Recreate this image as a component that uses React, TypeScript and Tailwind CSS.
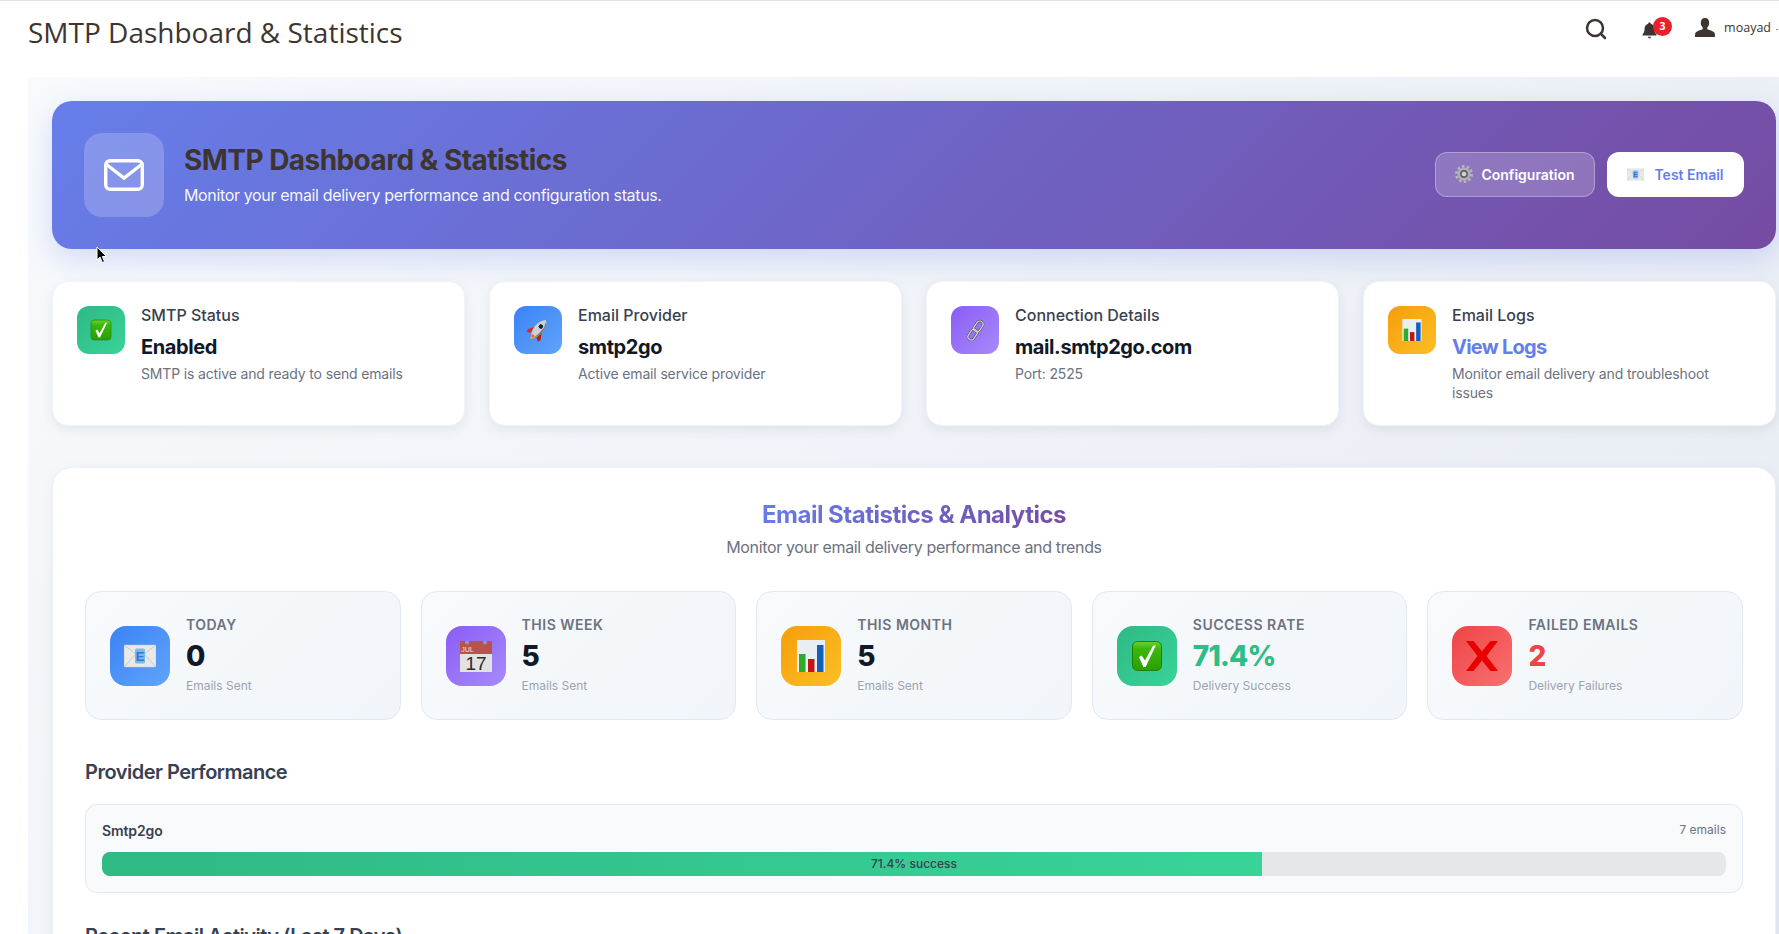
import { Search } from "lucide-react";
import type { ReactNode } from "react";

const CheckEmoji = ({ size }: { size: number }) => (
  <svg width={size} height={size} viewBox="0 0 32 32">
    <defs>
      <linearGradient id="chk" x1="0" y1="0" x2="0" y2="1">
        <stop offset="0" stopColor="#6fd12f" />
        <stop offset="0.25" stopColor="#3ab80e" />
        <stop offset="1" stopColor="#2b9f00" />
      </linearGradient>
    </defs>
    <rect x="1.5" y="1.5" width="29" height="29" rx="5" fill="url(#chk)" stroke="#20810a" />
    <path d="M8 17l2.6-1.6 3.4 5.2L22.2 5.5h2.6L14.6 27h-2.2z" fill="#fff" />
  </svg>
);

const RocketEmoji = ({ size }: { size: number }) => (
  <svg width={size} height={size} viewBox="0 0 32 32">
    <g transform="rotate(40 16 16)">
      <path d="M12 24l4 8 4-8z" fill="#f9b21d" />
      <path d="M13.500 24l2.500 5 2.500-5z" fill="#f0561d" />
      <path d="M10 15l-5 9 1 4 5-3z" fill="#e0281a" />
      <path d="M22 15l5 9-1 4-5-3z" fill="#b81c12" />
      <path d="M16 -1c5 4 6.500 10 6.500 15 0 4-1 8-2.500 11h-8c-1.500-3-2.500-7-2.500-11C9.500 9 11 3 16 -1z" fill="#ccd1d9" />
      <path d="M16 -1c3 4 4 10 4 15 0 4-.5 8-1.500 11H20c1.500-3 2.500-7 2.500-11C22.500 9 21 3 16 -1z" fill="#6f7a88" />
      <circle cx="16" cy="10" r="3.800" fill="#23262c" stroke="#eef0f3" strokeWidth="1.200" />
    </g>
  </svg>
);

const LinkEmoji = ({ size }: { size: number }) => (
  <svg width={size} height={size} viewBox="0 0 32 32" fill="none">
    <g transform="rotate(35 16 16)">
      <rect x="11.500" y="1" width="9" height="16" rx="4.500" stroke="#4a4b52" strokeWidth="3.400" />
      <rect x="11.500" y="15" width="9" height="16" rx="4.500" stroke="#4a4b52" strokeWidth="3.400" />
      <rect x="11.500" y="1" width="9" height="16" rx="4.500" stroke="#d4d5da" strokeWidth="1.800" />
      <rect x="11.500" y="15" width="9" height="16" rx="4.500" stroke="#d4d5da" strokeWidth="1.800" />
    </g>
  </svg>
);

const ChartEmoji = ({ size }: { size: number }) => (
  <svg width={size} height={size} viewBox="0 0 32 32">
    <rect x="2" y="0" width="28" height="32" fill="#e9eef3" />
    <rect x="4" y="14" width="6.500" height="18" fill="#2cab2c" />
    <rect x="13" y="19" width="6.500" height="13" fill="#c41414" />
    <rect x="22" y="5" width="6.500" height="27" fill="#1560bd" />
  </svg>
);

const MailEmoji = ({ size }: { size: number }) => (
  <svg width={size} height={size} viewBox="0 0 32 32">
    <rect x="0" y="5" width="32" height="22" rx="1" fill="#e9e9ea" stroke="#c8cacc" strokeWidth="0.500" />
    <path d="M0 5l16 12L32 5M0 27l12-13M32 27L20 14" fill="none" stroke="#bfc1c4" strokeWidth="0.800" />
    <rect x="11" y="8.500" width="10" height="15" rx="1.500" fill="#7bb8ef" />
    <text x="16" y="21" textAnchor="middle" fontSize="13" fontWeight="700" fill="#2f78cf" fontFamily="Liberation Sans, sans-serif">E</text>
  </svg>
);

const CalendarEmoji = ({ size }: { size: number }) => (
  <svg width={size} height={size} viewBox="0 0 32 32" className="overflow-visible">
    <rect x="0" y="13" width="32" height="19" fill="#e2e2e2" />
    <rect x="0" y="1" width="32" height="13" fill="#b5544f" />
    <circle cx="7" cy="2.500" r="2" fill="#9d8fdc" />
    <circle cx="25" cy="2.500" r="2" fill="#9d8fdc" />
    <text x="7.500" y="12" textAnchor="middle" fontSize="7" fill="#f1e3e0" fontFamily="Liberation Sans, sans-serif">JUL</text>
    <text x="16" y="30" textAnchor="middle" fontSize="19" fill="#2b2b2b" fontFamily="Liberation Sans, sans-serif">17</text>
  </svg>
);

const CrossEmoji = ({ size }: { size: number }) => (
  <svg width={size} height={size} viewBox="0 0 32 32">
    <path d="M0 1h7.500L16 11.500 24.500 1H32L20.500 16 32 31h-7.500L16 20.500 7.500 31H0l11.500-15z" fill="#e80000" />
  </svg>
);

const GearEmoji = ({ size }: { size: number }) => (
  <svg width={size} height={size} viewBox="0 0 32 32" fill="none">
    <circle cx="16" cy="16" r="13.500" stroke="#b6b6ba" strokeWidth="5" strokeDasharray="4.500 4" />
    <circle cx="16" cy="16" r="11.500" fill="#b0b0b4" />
    <circle cx="16" cy="16" r="7" fill="#5e5f63" />
    <circle cx="16" cy="16" r="4.200" fill="#d2d2d5" />
  </svg>
);

const BellIcon = () => (
  <svg width="15" height="17" viewBox="0 0 15 17" fill="#3e3530">
    <path d="M7.500 0.500c.8 0 1.300.5 1.300 1.300 2.300.6 3.500 2.400 3.600 4.700.1 2.700.6 4.400 2.100 6v1H.5v-1c1.500-1.600 2-3.300 2.100-6 .1-2.300 1.300-4.100 3.600-4.700 0-.8.500-1.300 1.300-1.300z" />
    <path d="M5.800 14.700h3.400c-.2.900-.8 1.500-1.700 1.500s-1.500-.6-1.700-1.500z" />
  </svg>
);

const UserIcon = () => (
  <svg width="20" height="19" viewBox="0 0 20 19" fill="#3e3530">
    <path d="M10 0c2.600 0 4.200 2 4.200 4.800 0 2-.8 3.700-1.900 4.700v1.700c2.800.9 6.200 2 7.200 3.500.4.700.5 2.500.5 4.300H0c0-1.800.1-3.600.5-4.300 1-1.500 4.400-2.600 7.200-3.500V9.500C6.600 8.500 5.800 6.800 5.800 4.800 5.800 2 7.400 0 10 0z" />
  </svg>
);

const MailOutline = () => (
  <svg width="40" height="32" viewBox="0 0 40 32" fill="none" stroke="#fff" strokeWidth="3.400">
    <rect x="1.700" y="1.700" width="36.600" height="28.600" rx="4.500" />
    <path d="M2.500 5.500L20 19 37.500 5.500" />
  </svg>
);

function InfoCard({ icon, tint, title, value, note, valueClass }: { icon: ReactNode; tint: string; title: string; value: string; note: string; valueClass: string }) {
  return (
    <div className="flex h-[145px] items-start gap-4 rounded-2xl border border-[#f1f3f7] bg-white p-6 shadow-[0_4px_12px_rgba(15,23,42,0.07)]">
      <div className={`flex h-12 w-12 shrink-0 items-center justify-center rounded-xl ${tint}`}>{icon}</div>
      <div className="min-w-0">
        <div className="text-[16px] leading-[18px] font-medium text-[#374151]">{title}</div>
        <div className={`mt-[11px] text-[20px] leading-[24px] font-bold ${valueClass}`}>{value}</div>
        <div className="mt-[5px] text-[14px] leading-[19px] tracking-[-0.15px] text-[#6b7280]">{note}</div>
      </div>
    </div>
  );
}

function StatCard({ icon, tint, label, value, note, valueClass }: { icon: ReactNode; tint: string; label: string; value: string; note: string; valueClass: string }) {
  return (
    <div className="flex h-[129px] items-center gap-4 rounded-2xl border border-[#e2e8f0] bg-[linear-gradient(135deg,#f8fafc,#f1f5f9)] px-6">
      <div className={`flex h-[60px] w-[60px] shrink-0 items-center justify-center rounded-2xl ${tint}`}>{icon}</div>
      <div className="-mt-[2px]">
        <div className="text-[14px] leading-[18px] font-semibold tracking-[0.5px] text-[#6b7280]">{label}</div>
        <div className={`mt-[3px] text-[28px] leading-[38px] font-extrabold tracking-[-0.8px] ${valueClass}`}>{value}</div>
        <div className="mt-[3px] text-[12px] leading-[16px] text-[#9ca3af]">{note}</div>
      </div>
    </div>
  );
}

export default function App() {
  return (
    <div className="relative h-screen overflow-hidden bg-white font-['Inter',sans-serif]">
      <header className="flex h-[77px] items-start justify-between border-t border-[#e3e3e3] pl-[28px] font-['Open_Sans',sans-serif] text-[#3e3530]">
        <h1 className="mt-[11px] text-[28px] leading-[40px] font-normal">SMTP Dashboard &amp; Statistics</h1>
        <div className="mt-[16px] flex items-center">
          <Search size={24} strokeWidth={2.5} className="mr-[34px]" />
          <div className="relative mr-[38px] mt-[3px] flex">
            <BellIcon />
            <span className="absolute -top-[5px] left-[11px] flex h-[19px] w-[19px] items-center justify-center rounded-full bg-[#e8212c] text-[10.500px] font-bold text-white">3</span>
          </div>
          <div className="-mt-[3px] flex"><UserIcon /></div>
          <span className="-mt-[2px] ml-[9px] text-[12.500px] leading-[20px]">moayad</span>
          <span className="ml-[5px] mr-[1px] h-px w-[2px] bg-[#8a8a8a]"></span>
        </div>
      </header>

      <main className="ml-[28px] min-h-[857px] bg-[linear-gradient(135deg,#f8fafc,#e6eaf3)] pl-6 pr-[3px] pt-6">
        <section className="flex h-[148px] items-center justify-between rounded-[20px] bg-[linear-gradient(135deg,#667eea,#764ba2)] px-8 shadow-[0_10px_30px_rgba(102,126,234,0.25)]">
          <div className="flex items-center gap-5">
            <div className="flex h-[84px] w-20 items-center justify-center rounded-[18px] bg-white/20"><MailOutline /></div>
            <div>
              <h2 className="text-[28px] leading-[34px] font-bold tracking-[-0.55px] text-[#3e3530]">SMTP Dashboard &amp; Statistics</h2>
              <p className="mt-[6px] text-[16px] leading-[24px] tracking-[-0.35px] text-white/95">Monitor your email delivery performance and configuration status.</p>
            </div>
          </div>
          <div className="mb-[2px] flex gap-3">
            <button className="flex h-[45px] w-[160px] items-center justify-center gap-2 rounded-xl border border-white/30 bg-white/20 text-[14px] font-semibold text-white">
              <GearEmoji size={18} />
              Configuration
            </button>
            <button className="flex h-[45px] w-[137px] items-center justify-center gap-2.5 rounded-xl bg-white text-[14px] font-semibold text-[#667eea]">
              <MailEmoji size={17} />
              Test Email
            </button>
          </div>
        </section>

        <section className="mt-8 grid grid-cols-4 gap-6">
          <InfoCard icon={<CheckEmoji size={22} />} tint="bg-[linear-gradient(135deg,#2fb985,#39d398)]" title="SMTP Status" value="Enabled" note="SMTP is active and ready to send emails" valueClass="tracking-[-0.4px] text-[#111827]" />
          <InfoCard icon={<RocketEmoji size={24} />} tint="bg-[linear-gradient(135deg,#3b82f6,#60a5fa)]" title="Email Provider" value="smtp2go" note="Active email service provider" valueClass="tracking-[-0.4px] text-[#111827]" />
          <InfoCard icon={<LinkEmoji size={23} />} tint="bg-[linear-gradient(135deg,#8b5cf6,#a78bfa)]" title="Connection Details" value="mail.smtp2go.com" note="Port: 2525" valueClass="tracking-[-0.4px] text-[#111827]" />
          <InfoCard icon={<ChartEmoji size={22} />} tint="bg-[linear-gradient(135deg,#f59e0b,#fbbf24)]" title="Email Logs" value="View Logs" note="Monitor email delivery and troubleshoot issues" valueClass="tracking-[-0.75px] text-[#667eea]" />
        </section>

        <section className="mt-[41px] rounded-[20px] border border-[#eef0f5] bg-white p-8 shadow-[0_4px_16px_rgba(15,23,42,0.05)]">
          <h2 className="mx-auto w-fit bg-[linear-gradient(135deg,#667eea,#764ba2)] bg-clip-text text-[24px] leading-[29px] font-bold tracking-[-0.5px] text-transparent">Email Statistics &amp; Analytics</h2>
          <p className="mt-[6px] text-center text-[16px] leading-[24px] tracking-[-0.35px] text-[#6b7280]">Monitor your email delivery performance and trends</p>

          <div className="mt-8 grid grid-cols-5 gap-5">
            <StatCard icon={<MailEmoji size={32} />} tint="bg-[linear-gradient(135deg,#3b82f6,#60a5fa)]" label="TODAY" value="0" note="Emails Sent" valueClass="text-[#111827]" />
            <StatCard icon={<CalendarEmoji size={32} />} tint="bg-[linear-gradient(135deg,#8b5cf6,#a78bfa)]" label="THIS WEEK" value="5" note="Emails Sent" valueClass="text-[#111827]" />
            <StatCard icon={<ChartEmoji size={32} />} tint="bg-[linear-gradient(135deg,#f59e0b,#fbbf24)]" label="THIS MONTH" value="5" note="Emails Sent" valueClass="text-[#111827]" />
            <StatCard icon={<CheckEmoji size={32} />} tint="bg-[linear-gradient(135deg,#2fb985,#39d398)]" label="SUCCESS RATE" value="71.4%" note="Delivery Success" valueClass="text-[#2fbd85]" />
            <StatCard icon={<CrossEmoji size={32} />} tint="bg-[linear-gradient(135deg,#ef4444,#f87171)]" label="FAILED EMAILS" value="2" note="Delivery Failures" valueClass="text-[#ef4444]" />
          </div>

          <h3 className="mt-[38px] text-[20px] leading-[28px] font-semibold tracking-[-0.5px] text-[#374151]">Provider Performance</h3>
          <div className="mt-[18px] rounded-xl border border-[#e2e8f0] bg-[#f9fafb] px-4 pt-[15px] pb-4">
            <div className="flex items-center justify-between">
              <span className="text-[14px] leading-[21px] font-semibold tracking-[-0.1px] text-[#374151]">Smtp2go</span>
              <span className="-mt-[2px] text-[12px] leading-[18px] text-[#6b7280]">7 emails</span>
            </div>
            <div className="relative mt-[11px] h-6 overflow-hidden rounded-lg bg-[#e5e7eb]">
              <div className="h-full w-[71.4%] bg-[linear-gradient(90deg,#2fb985,#39d398)]"></div>
              <span className="absolute inset-0 flex items-center justify-center text-[12px] font-medium text-[#374151]">71.4% success</span>
            </div>
          </div>

          <h3 className="mt-[29px] text-[20px] leading-[28px] font-semibold tracking-[-0.5px] text-[#374151]">Recent Email Activity (Last 7 Days)</h3>
        </section>
      </main>

      <svg className="absolute left-[96px] top-[246px]" width="12" height="18" viewBox="0 0 12 18">
        <path d="M1 1v13l3-3 2.300 5.500 2.200-1L6.300 10.500H10.500z" fill="#000" stroke="#fff" strokeWidth="1" />
      </svg>
    </div>
  );
}
